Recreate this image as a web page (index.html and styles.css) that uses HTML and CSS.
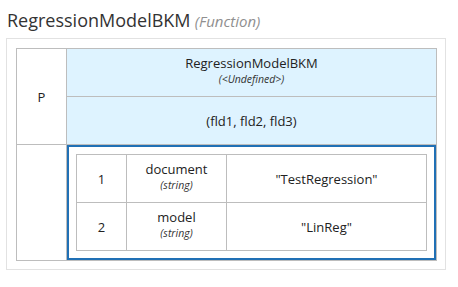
FILE: index.html
```html
<!DOCTYPE html>
<html>
<head>
<meta charset="utf-8">
<link rel="stylesheet" href="styles.css">
</head>
<body>
<div class="title"><span class="name">RegressionModelBKM</span> <span class="kind">(Function)</span></div>
<div class="frame">
  <table class="grid">
    <tr>
      <td class="pcell" rowspan="2">P</td>
      <td class="head head-top">
        <div class="stack">
          <span class="main">RegressionModelBKM</span>
          <span class="sub">(&lt;Undefined&gt;)</span>
        </div>
      </td>
    </tr>
    <tr>
      <td class="head head-params">(fld1, fld2, fld3)</td>
    </tr>
    <tr>
      <td class="blank"></td>
      <td class="bodycell">
        <div class="selected">
          <table class="ctx">
            <tr>
              <td class="num">1</td>
              <td class="entry">
                <div class="stack">
                  <span class="main">document</span>
                  <span class="sub">(string)</span>
                </div>
              </td>
              <td class="value">"TestRegression"</td>
            </tr>
            <tr>
              <td class="num">2</td>
              <td class="entry">
                <div class="stack">
                  <span class="main">model</span>
                  <span class="sub">(string)</span>
                </div>
              </td>
              <td class="value">"LinReg"</td>
            </tr>
          </table>
        </div>
      </td>
    </tr>
  </table>
</div>
</body>
</html>
```

FILE: styles.css
```css
html, body {
  margin: 0;
  padding: 0;
  background: #ffffff;
}

body {
  font-family: "Open Sans", "Noto Sans", sans-serif;
  color: #222222;
  width: 458px;
  height: 287px;
  overflow: hidden;
}

.title {
  box-sizing: border-box;
  height: 38px;
  padding: 8px 0 0 7px;
  line-height: 24px;
  white-space: nowrap;
}

.title .name {
  font-size: 18px;
  color: #333333;
}

.title .kind {
  font-size: 15px;
  font-style: italic;
  color: #8f8f8f;
}

.frame {
  box-sizing: border-box;
  margin-left: 6px;
  width: 440px;
  height: 232px;
  border: 1px solid #e2e2e2;
  padding: 9px;
}

table {
  border-collapse: collapse;
  border-spacing: 0;
}

.grid {
  width: 421px;
  height: 212px;
  table-layout: fixed;
}

.grid td {
  border: 1px solid #bdbdbd;
  padding: 0;
  text-align: center;
  vertical-align: middle;
  font-size: 13px;
}

.pcell, .blank {
  width: 49px;
}

.head {
  background: #def3ff;
  height: 47px;
}

.stack {
  display: flex;
  flex-direction: column;
  align-items: center;
  justify-content: center;
  padding-bottom: 3px;
}

.stack .main {
  font-size: 13px;
  line-height: 15px;
}

.stack .sub {
  margin-top: 1px;
  font-size: 10.5px;
  font-style: italic;
  line-height: 15px;
  color: #333333;
}

.bodycell {
  height: 115px;
}

.grid td.bodycell {
  padding: 0;
}

.selected {
  box-sizing: border-box;
  height: 115px;
  border: 2px solid #2070b5;
  padding: 7px;
}

.ctx {
  width: 351px;
  height: 96px;
  table-layout: fixed;
}

.grid .ctx td {
  border: 1px solid #bdbdbd;
  height: 47px;
  font-size: 13px;
}

.ctx .num {
  width: 49px;
}

.ctx .entry {
  width: 99px;
}
```
